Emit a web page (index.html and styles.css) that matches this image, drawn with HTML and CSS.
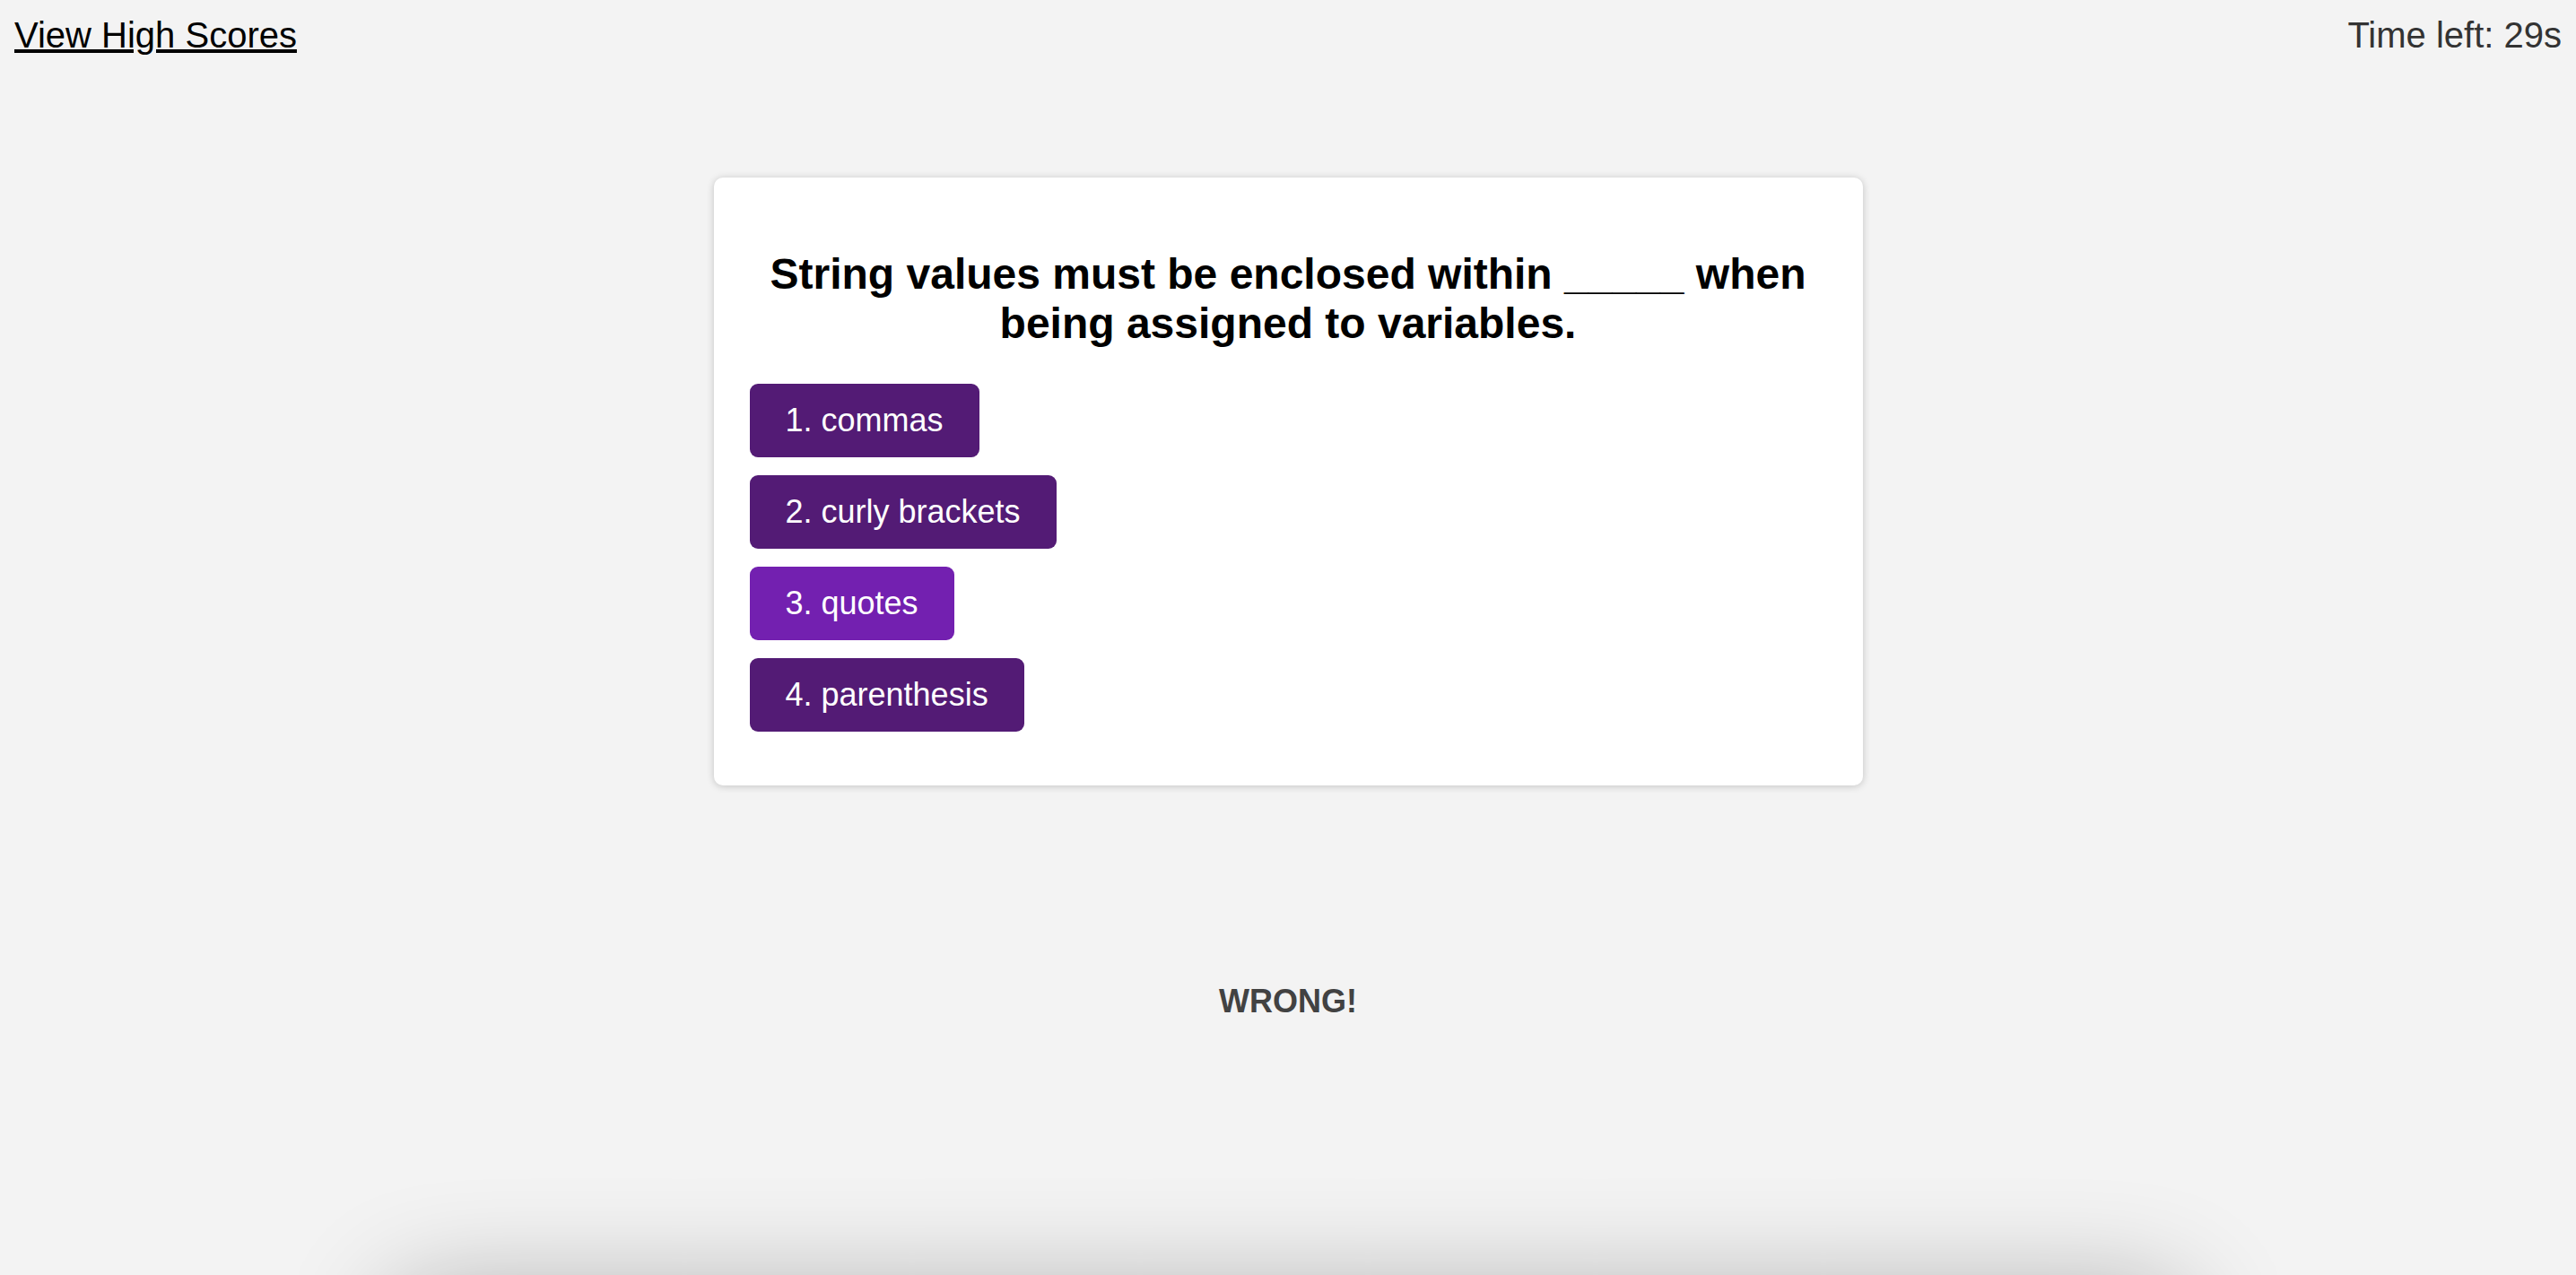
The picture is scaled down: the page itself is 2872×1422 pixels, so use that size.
FILE: index.html
```html
<!DOCTYPE html>
<html lang="en">
<head>
<meta charset="utf-8">
<title>Code Quiz</title>
<link rel="stylesheet" href="styles.css">
</head>
<body>
  <header class="topbar">
    <a class="scores-link" href="#">View High Scores</a>
    <div class="timer">Time left: 29s</div>
  </header>

  <main class="quiz">
    <section class="card">
      <h2 class="question">String values must be enclosed within _____ when being assigned to variables.</h2>
      <div class="choices">
        <button class="choice">1. commas</button>
        <button class="choice">2. curly brackets</button>
        <button class="choice choice-active">3. quotes</button>
        <button class="choice">4. parenthesis</button>
      </div>
    </section>

    <p class="feedback">WRONG!</p>

    <section class="lower-panel"></section>
  </main>
</body>
</html>
```

FILE: styles.css
```css
html, body {
  height: 100%;
}

body {
  margin: 16px;
  background: #f3f3f3;
  font-family: "Liberation Sans", Arial, Helvetica, sans-serif;
  overflow: hidden;
}

.topbar {
  display: flex;
  justify-content: space-between;
  align-items: flex-start;
  font-size: 40px;
  padding-top: 1px;
}

.scores-link {
  color: #000;
  text-decoration: underline;
  text-decoration-thickness: 4px;
  text-underline-offset: 2px;
}

.timer {
  color: #333;
}

.quiz {
  display: flex;
  flex-direction: column;
  align-items: center;
}

.card {
  box-sizing: border-box;
  width: 1281px;
  margin-top: 136px;
  padding: 40px 40px 60px;
  background: #fff;
  border-radius: 10px;
  box-shadow: 0 1px 8px rgba(0, 0, 0, 0.2);
}

.question {
  margin: 40px 0;
  font-size: 48px;
  font-weight: bold;
  text-align: center;
  color: #000;
}

.choices {
  display: flex;
  flex-direction: column;
  align-items: flex-start;
  gap: 20px;
}

.choice {
  font-family: "Liberation Sans", Arial, Helvetica, sans-serif;
  font-size: 36px;
  color: #fff;
  background: #531b75;
  border: none;
  border-radius: 9px;
  padding: 20px 40px;
  line-height: normal;
  cursor: pointer;
}

.choice-active {
  background: #7320b0;
}

.feedback {
  margin: 220px 0 0;
  font-size: 36px;
  font-weight: bold;
  color: #424242;
}

.lower-panel {
  width: 2000px;
  height: 400px;
  margin-top: 302px;
  flex-shrink: 0;
  background: #f3f3f3;
  border-radius: 40px;
  box-shadow: 0 0 120px rgba(0, 0, 0, 0.3);
}
```
